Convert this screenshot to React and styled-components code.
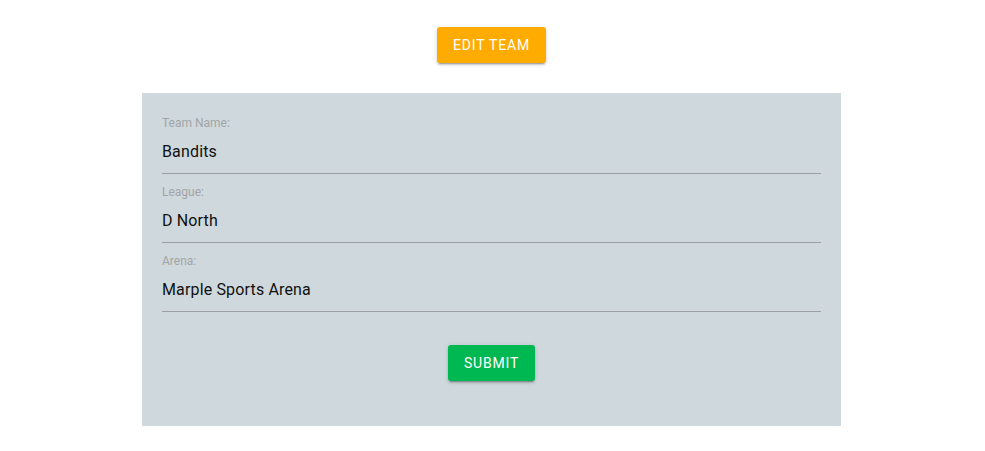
import React from "react";
import styled, { createGlobalStyle } from "styled-components";

const Global = createGlobalStyle`
  html, body { margin: 0; padding: 0; background: #ffffff; }
  body { font-family: Roboto, "Liberation Sans", Arial, sans-serif; }
`;

const Page = styled.div`
  display: flex;
  flex-direction: column;
  align-items: center;
  padding: 27px 2px 0 0;
`;

const Button = styled.button`
  font-family: Roboto, "Liberation Sans", Arial, sans-serif;
  font-size: 14px;
  font-weight: 400;
  letter-spacing: 0.8px;
  line-height: 20px;
  text-transform: uppercase;
  color: #ffffff;
  background: ${(p) => p.$bg};
  border: none;
  border-radius: 3px;
  padding: 8px 16px;
  cursor: pointer;
  box-shadow: 0 3px 1px -2px rgba(0, 0, 0, 0.2), 0 2px 2px 0 rgba(0, 0, 0, 0.14),
    0 1px 5px 0 rgba(0, 0, 0, 0.12);
`;

const Panel = styled.form`
  width: 699px;
  box-sizing: border-box;
  margin-top: 30px;
  background: #cfd8dc;
  padding: 22px 20px 45px;
  display: flex;
  flex-direction: column;
`;

const Field = styled.label`
  display: flex;
  flex-direction: column;
  margin-bottom: 10px;
`;

const Label = styled.span`
  font-size: 12px;
  line-height: 16px;
  color: #a2a5a7;
`;

const Input = styled.input`
  font-family: Roboto, "Liberation Sans", Arial, sans-serif;
  font-size: 16px;
  letter-spacing: 0.15px;
  line-height: 20px;
  height: 20px;
  color: #111111;
  background: transparent;
  border: none;
  border-bottom: 1px solid #9c9fa1;
  padding: 11px 0 11px;
  margin: 0;
  outline: none;
  box-sizing: content-box;
`;

const Actions = styled.div`
  display: flex;
  justify-content: center;
  margin-top: 23px;
`;

const fields = [
  { label: "Team Name:", value: "Bandits" },
  { label: "League:", value: "D North" },
  { label: "Arena:", value: "Marple Sports Arena" },
];

export default function App() {
  return (
    <>
      <Global />
      <Page>
        <Button type="button" $bg="#ffab00">Edit Team</Button>
        <Panel onSubmit={(e) => e.preventDefault()}>
          {fields.map((f) => (
            <Field key={f.label}>
              <Label>{f.label}</Label>
              <Input defaultValue={f.value} />
            </Field>
          ))}
          <Actions>
            <Button type="submit" $bg="#00b852">Submit</Button>
          </Actions>
        </Panel>
      </Page>
    </>
  );
}
